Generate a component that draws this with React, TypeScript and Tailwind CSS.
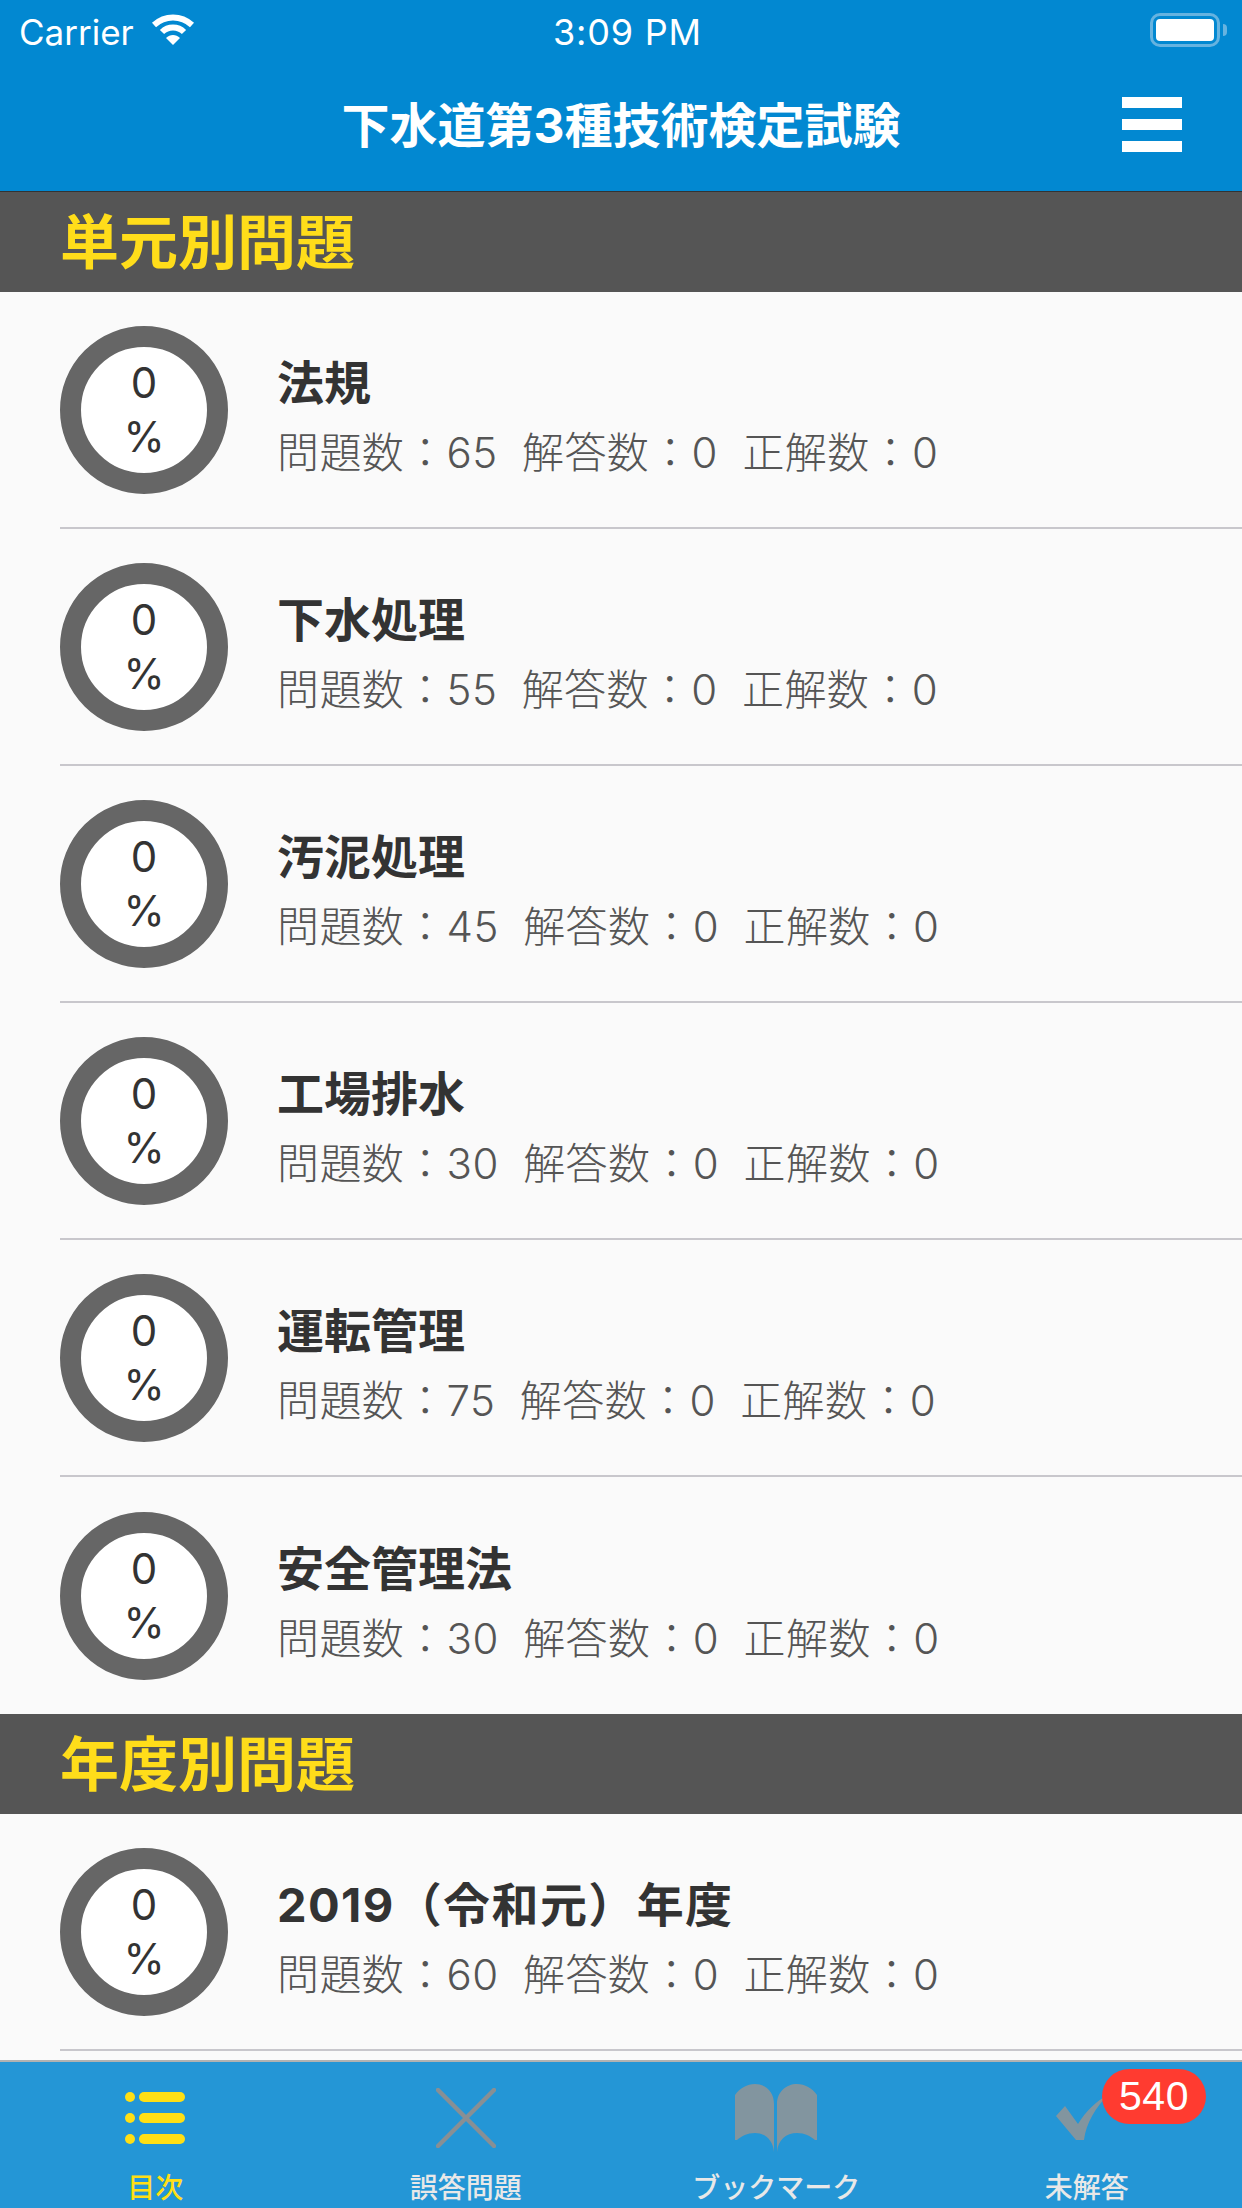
const UNITS: [string, number][] = [
  ["法規", 65],
  ["下水処理", 55],
  ["汚泥処理", 45],
  ["工場排水", 30],
  ["運転管理", 75],
  ["安全管理法", 30],
];

function Row({ title, count, line, wide }: { title: string; count: number; line: boolean; wide?: boolean }) {
  return (
    <div className={`h-[237px] ml-[60px] flex items-center shrink-0 ${line ? "border-b-[2px] border-[#c8c7cc]" : ""}`}>
      <div className="w-[168px] h-[168px] rounded-full border-[21px] border-[#666666] bg-white flex flex-col items-center justify-center text-[#333333] text-[42px] leading-[54px] shrink-0 pt-[1px]">
        <span>0</span>
        <span>%</span>
      </div>
      <div className="ml-[49px] flex flex-col pt-[16px]">
        <div className={`text-[47px] leading-[60px] font-bold text-[#333333] ${wide ? "tracking-[1.4px]" : ""}`}>{title}</div>
        <div className="mt-[10px] text-[42px] leading-[60px] font-light text-[#555555] whitespace-pre tracking-[0.4px]">
          {`問題数：${count}  解答数：0  正解数：0`}
        </div>
      </div>
    </div>
  );
}

function Section({ title }: { title: string }) {
  return (
    <div className="h-[100px] bg-[#555555] pl-[60px] flex items-center shrink-0 text-[#ffdd1a] text-[59px] font-bold leading-none">
      {title}
    </div>
  );
}

function Tab({ label, active, icon }: { label: string; active?: boolean; icon: React.ReactNode }) {
  return (
    <div className="flex-1 flex flex-col items-center">
      <div className="h-[110px] w-full flex items-center justify-center pt-[2px]">{icon}</div>
      <div className={`text-[28px] leading-[32px] font-medium ${active ? "text-[#ffdf15]" : "text-[#e8e8e8]"}`}>{label}</div>
    </div>
  );
}

export default function App() {
  return (
    <div
      className="w-[1242px] h-[2208px] flex flex-col overflow-hidden bg-[#fafafa] relative"
      style={{ fontFamily: 'Inter, "Noto Sans CJK JP", sans-serif' }}
    >
      <div className="h-[192px] bg-[#0288d1] shrink-0 flex flex-col text-white border-b border-[#333333]">
        <div className="h-[60px] relative flex items-center justify-between pl-[19px] pr-[15px] text-[35px] pt-[4px]">
          <div className="flex items-center gap-[17px]">
            <span>Carrier</span>
            <svg width="44" height="32" viewBox="0 0 44 32" className="-mt-[4px]">
              <path d="M3 11 C14 1 30 1 41 11" stroke="#fff" strokeWidth="6" fill="none" />
              <path d="M11 18 C17 12 27 12 33 18" stroke="#fff" strokeWidth="6" fill="none" />
              <path d="M15 24 C19 20 25 20 29 24 L22 31 Z" fill="#fff" />
            </svg>
          </div>
          <span className="absolute left-[553px] text-[36px] tracking-[0.8px]">3:09 PM</span>
          <div className="flex items-center gap-[3px] -mt-[4px]">
            <div className="w-[70px] h-[34px] rounded-[10px] border-[3px] border-[#66b3e0] p-[3px]">
              <div className="w-full h-full rounded-[4px] bg-white" />
            </div>
            <div className="w-[4px] h-[12px] rounded-r-full bg-[#66b3e0]" />
          </div>
        </div>
        <div className="relative flex-1 flex items-center justify-center">
          <span className="text-[48px] font-bold leading-none">下水道第3種技術検定試験</span>
          <div className="absolute left-[1122px] top-[37px] w-[60px] flex flex-col gap-[11px]">
            <div className="h-[11px] bg-white" />
            <div className="h-[11px] bg-white" />
            <div className="h-[11px] bg-white" />
          </div>
        </div>
      </div>

      <div className="flex-1 min-h-0 overflow-hidden flex flex-col">
        <Section title="単元別問題" />
        {UNITS.map(([t, c], i) => (
          <Row key={t} title={t} count={c} line={i < UNITS.length - 1} />
        ))}
        <Section title="年度別問題" />
        <Row title="2019（令和元）年度" count={60} line wide />
      </div>

      <div className="h-[148px] shrink-0 bg-[#2496d6] border-t-[2px] border-[#b2b2b2] flex relative">
        <Tab
          label="目次"
          active
          icon={
            <svg width="60" height="52" viewBox="0 0 60 52" fill="#ffdf15">
              <ellipse cx="5" cy="5" rx="5" ry="5" />
              <ellipse cx="5" cy="26" rx="5" ry="5" />
              <ellipse cx="5" cy="47" rx="5" ry="5" />
              <rect x="14" y="0" width="46" height="10" rx="5" />
              <rect x="14" y="21" width="46" height="10" rx="5" />
              <rect x="14" y="42" width="46" height="10" rx="5" />
            </svg>
          }
        />
        <Tab
          label="誤答問題"
          icon={
            <svg width="60" height="60" viewBox="0 0 60 60" stroke="#888f94" strokeWidth="4.5" strokeLinecap="round">
              <path d="M2 2 L58 58 M58 2 L2 58" />
            </svg>
          }
        />
        <Tab
          label="ブックマーク"
          icon={
            <svg width="82" height="68" viewBox="0 0 82 68" fill="#82959f">
              <path d="M0 11 C5 4 12 0 20 0 C31 0 39 8 39 20 L39 68 C38 56 30 49 20 49 C12 49 7 52 2 56 L0 56 Z" />
              <path d="M82 11 C77 4 70 0 62 0 C51 0 42 8 42 20 L42 68 C43 56 51 49 62 49 C70 49 75 52 80 56 L82 56 Z" />
            </svg>
          }
        />
        <Tab
          label="未解答"
          icon={
            <svg width="62" height="46" viewBox="0 0 62 46" fill="#82959f">
              <path d="M0 21 L9 11 L22 29 C30 16 40 6 52 0 C40 12 30 28 28 45 L20 45 Z" />
            </svg>
          }
        />
        <div className="absolute left-[1102px] top-[7px] w-[104px] h-[55px] rounded-full bg-[#ff3b30] text-white flex items-center justify-center text-[41px] tracking-[0.5px] font-['Liberation_Sans']">
          540
        </div>
      </div>
    </div>
  );
}
